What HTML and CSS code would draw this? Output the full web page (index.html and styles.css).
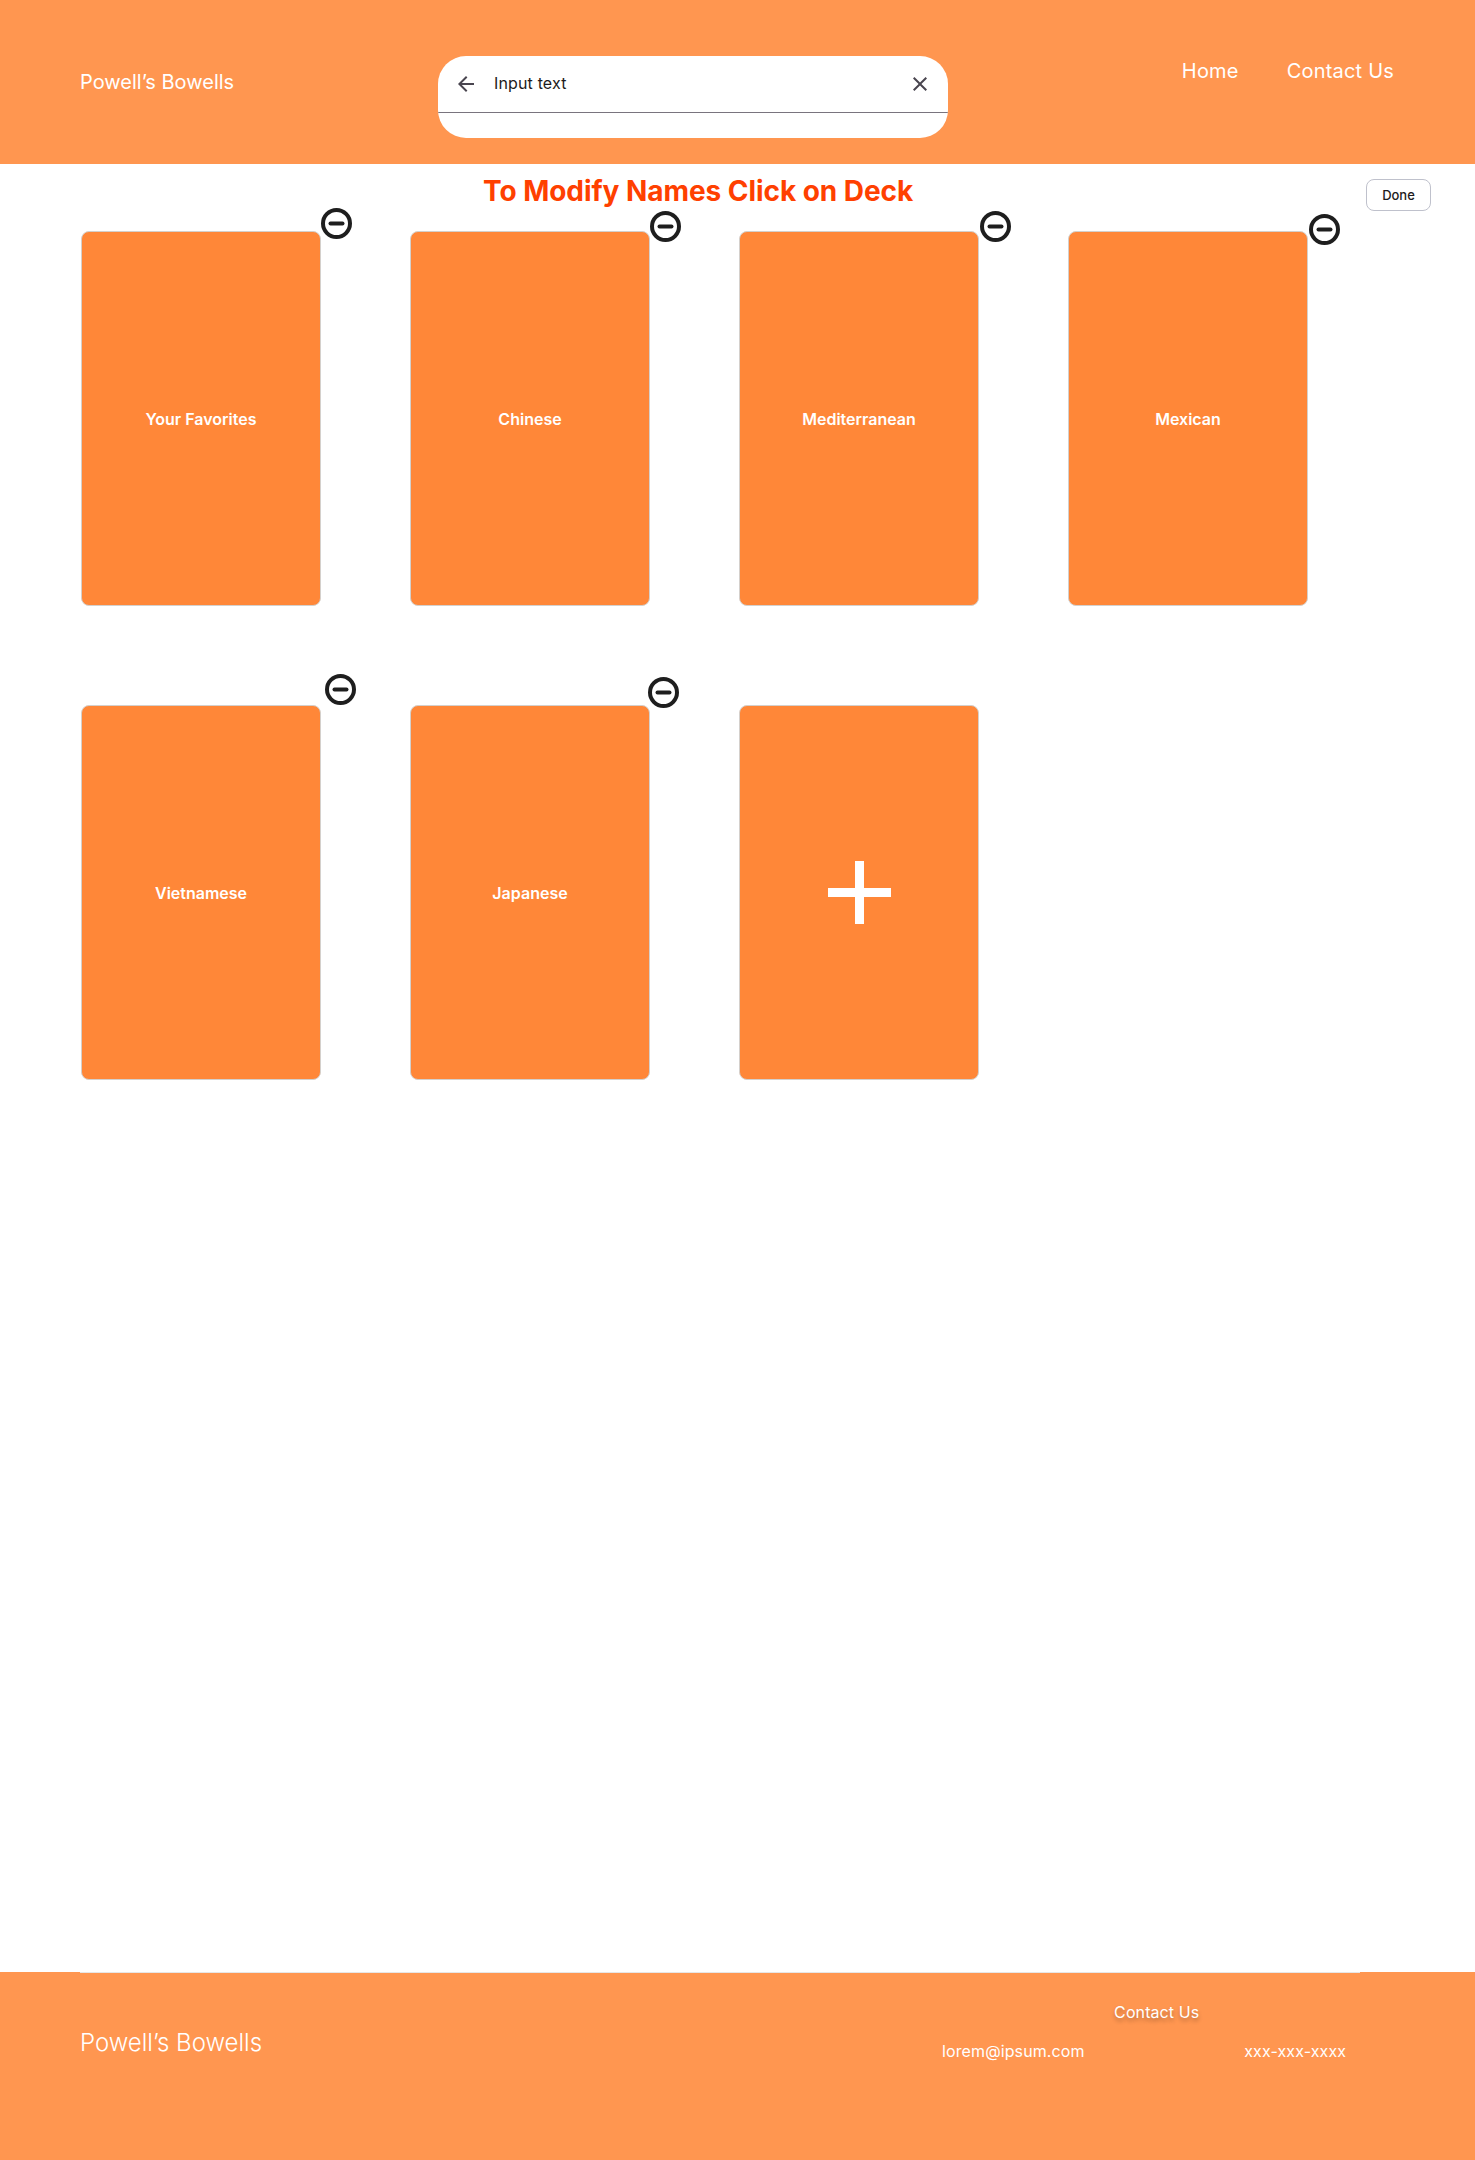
FILE: index.html
```html
<!DOCTYPE html>
<html lang="en">
<head>
<meta charset="utf-8">
<title>Powell's Bowells</title>
<link rel="stylesheet" href="styles.css">
</head>
<body>
<header class="site-header">
  <div class="brand">Powell’s Bowells</div>
  <div class="search">
    <div class="search-row">
      <svg class="search-icon" viewBox="0 0 24 24"><path d="M20 11H7.83l5.59-5.59L12 4l-8 8 8 8 1.41-1.41L7.83 13H20z"/></svg>
      <span class="search-text">Input text</span>
      <svg class="search-icon" viewBox="0 0 24 24"><path d="M19 6.41 17.59 5 12 10.59 6.41 5 5 6.41 10.59 12 5 17.59 6.41 19 12 13.41 17.59 19 19 17.59 13.41 12z"/></svg>
    </div>
  </div>
  <nav class="nav"><span>Home</span><span>Contact Us</span></nav>
</header>
<main class="main">
  <div class="toolbar">
    <h1 class="title">To Modify Names Click on Deck</h1>
    <button class="done">Done</button>
  </div>
  <div class="decks">
    <div class="deck">Your Favorites<svg class="minus m1" viewBox="0 0 31 31"><circle cx="15.5" cy="15.5" r="13.5"/><line x1="9.5" y1="15.5" x2="21.5" y2="15.5"/></svg></div>
    <div class="deck">Chinese<svg class="minus m2" viewBox="0 0 31 31"><circle cx="15.5" cy="15.5" r="13.5"/><line x1="9.5" y1="15.5" x2="21.5" y2="15.5"/></svg></div>
    <div class="deck">Mediterranean<svg class="minus m3" viewBox="0 0 31 31"><circle cx="15.5" cy="15.5" r="13.5"/><line x1="9.5" y1="15.5" x2="21.5" y2="15.5"/></svg></div>
    <div class="deck">Mexican<svg class="minus m4" viewBox="0 0 31 31"><circle cx="15.5" cy="15.5" r="13.5"/><line x1="9.5" y1="15.5" x2="21.5" y2="15.5"/></svg></div>
    <div class="deck">Vietnamese<svg class="minus m5" viewBox="0 0 31 31"><circle cx="15.5" cy="15.5" r="13.5"/><line x1="9.5" y1="15.5" x2="21.5" y2="15.5"/></svg></div>
    <div class="deck">Japanese<svg class="minus m6" viewBox="0 0 31 31"><circle cx="15.5" cy="15.5" r="13.5"/><line x1="9.5" y1="15.5" x2="21.5" y2="15.5"/></svg></div>
    <div class="deck"><svg class="plus" viewBox="0 0 63 63"><path d="M27 0h9v27h27v9H36v27h-9V36H0v-9h27z"/></svg></div>
  </div>
</main>
<footer class="site-footer">
  <div class="footer-rule"></div>
  <div class="footer-brand">Powell’s Bowells</div>
  <div class="contact">
    <div class="contact-head">Contact Us</div>
    <div class="contact-row"><span>lorem@ipsum.com</span><span>xxx-xxx-xxxx</span></div>
  </div>
</footer>
</body>
</html>
```

FILE: styles.css
```css
* { box-sizing: border-box; }
html, body { margin: 0; padding: 0; }
body {
  width: 1475px;
  height: 2160px;
  display: flex;
  flex-direction: column;
  background: #fff;
  font-family: Inter, "Liberation Sans", sans-serif;
  overflow: hidden;
}
.site-header {
  height: 164px;
  flex: none;
  background: #ff9650;
  color: #fff;
  display: flex;
  align-items: flex-start;
  padding: 56px 81px 0 80px;
}
.brand { width: 358px; font-size: 20px; line-height: 28px; margin-top: 12px; }
.search {
  width: 510px;
  height: 82px;
  background: #fff;
  border-radius: 28px;
  overflow: hidden;
}
.search-row {
  height: 57px;
  display: flex;
  align-items: center;
  gap: 16px;
  padding: 0 16px;
  border-bottom: 1px solid #79747e;
}
.search-icon { width: 24px; height: 24px; flex: none; fill: #49454f; }
.search-text { flex: 1; color: #1d1b20; font-size: 16px; letter-spacing: 0.15px; line-height: 24px; margin-bottom: 2px; }
.nav { margin-left: auto; display: flex; gap: 48px; font-size: 20px; line-height: 30px; letter-spacing: 0.2px; }
.main { flex: 1; }
.toolbar {
  height: 67px;
  display: flex;
  justify-content: space-between;
  align-items: flex-start;
  padding: 0 44px 0 483px;
}
.title {
  margin: 8px 0 0;
  font-size: 28px;
  line-height: 38px;
  font-weight: 700;
  letter-spacing: -0.05px;
  color: #ff4000;
}
.done {
  width: 65px;
  height: 32px;
  margin-top: 15px;
  border: 1px solid #bfc1cc;
  border-radius: 8px;
  background: #fff;
  color: #1d1b20;
  font: 500 13px/16px Inter, "Liberation Sans", sans-serif;
  padding: 0;
}
.decks {
  display: grid;
  grid-template-columns: repeat(4, 240px);
  grid-auto-rows: 375px;
  column-gap: 89px;
  row-gap: 99px;
  padding-left: 81px;
}
.deck {
  position: relative;
  display: flex;
  align-items: center;
  justify-content: center;
  background: #ff8738;
  border: 1px solid #d4d0cc;
  border-radius: 8px;
  color: #fff;
  font-size: 16px;
  font-weight: 600;
}
.minus {
  position: absolute;
  width: 31px;
  height: 31px;
  fill: none;
  stroke: #1e1e1e;
  stroke-width: 4;
}
.minus line { stroke-linecap: round; }
.m1 { left: 239px; top: -24px; }
.m2 { left: 239px; top: -21px; }
.m3 { left: 240px; top: -21px; }
.m4 { left: 240px; top: -18px; }
.m5 { left: 243px; top: -32px; }
.m6 { left: 237px; top: -29px; }
.plus { width: 63px; height: 63px; fill: #fff; }
.site-footer {
  position: relative;
  height: 188px;
  flex: none;
  background: #ff9650;
  color: #fff;
  display: flex;
  align-items: flex-start;
  padding: 0 0 0 80px;
}
.footer-rule {
  position: absolute;
  left: 80px;
  top: 0;
  width: 1280px;
  height: 1px;
  background: #e6e6e6;
}
.footer-brand { font-size: 24px; font-weight: 300; line-height: 32px; margin-top: 55px; }
.contact { margin-left: 680px; width: 404px; padding-top: 29px; font-size: 16px; line-height: 22px; letter-spacing: 0.1px; }
.contact-head { padding-left: 172px; text-shadow: 0 3px 4px rgba(0, 0, 0, 0.3); }
.contact-row { display: flex; justify-content: space-between; margin-top: 17px; }
```
